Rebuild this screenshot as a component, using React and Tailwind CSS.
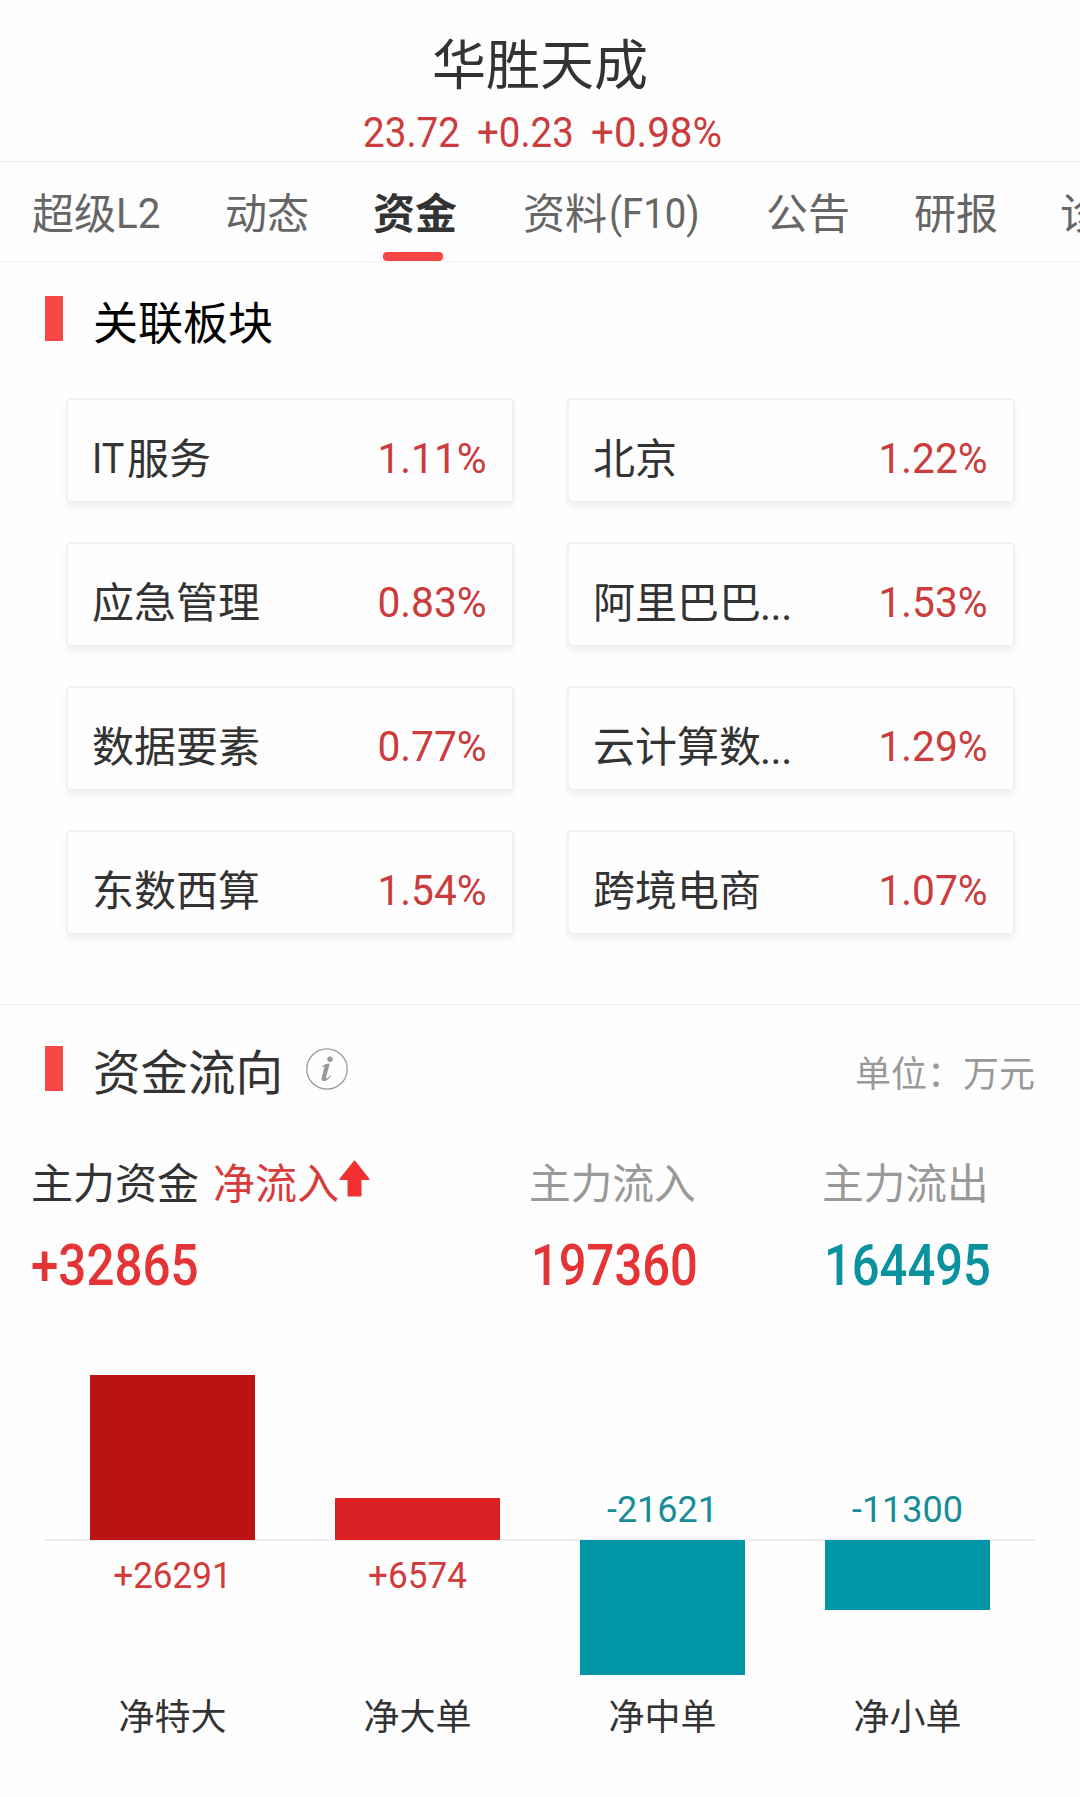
const tabs = [
  { pre: '超级', latin: 'L2', w: 'w-[45px]', scale: 'scale-x-[0.96]' },
  { pre: '动态' },
  { pre: '资金', active: true },
  { pre: '资料', latin: '(F10)', w: 'w-[95px] pl-[2px]', scale: 'scale-x-[0.91]', shift: 'ml-[2px]' },
  { pre: '公告' },
  { pre: '研报' },
  { pre: '诊', shift: '-ml-[2px]' },
];

const sectors = [
  { latin: 'IT', name: '服务', pct: '1.11%' },
  { name: '北京', pct: '1.22%' },
  { name: '应急管理', pct: '0.83%' },
  { name: '阿里巴巴', more: true, pct: '1.53%' },
  { name: '数据要素', pct: '0.77%' },
  { name: '云计算数', more: true, pct: '1.29%' },
  { name: '东数西算', pct: '1.54%' },
  { name: '跨境电商', pct: '1.07%' },
];

const flows = [
  { name: '净特大', value: 26291, height: 165, color: 'bg-[#bd1213]' },
  { name: '净大单', value: 6574, height: 42, color: 'bg-[#db2123]' },
  { name: '净中单', value: -21621, height: 135, color: 'bg-[#0096a6]' },
  { name: '净小单', value: -11300, height: 70, color: 'bg-[#0096a6]' },
];

function Header() {
  return (
    <header className="flex h-[162px] flex-col items-center border-b border-[#ebebeb] pt-[32px]">
      <h1 className="h-[60px] text-[54px] leading-[60px] text-[#333]">华胜天成</h1>
      <div className="mt-[11px] flex h-[60px] w-[355px] gap-[17px] whitespace-nowrap font-[Roboto] text-[42px] leading-[60px] text-[#cb3c3c]">
        <div className="w-[97px]"><span className="inline-block origin-left scale-x-[0.92]">23.72</span></div>
        <div className="w-[97px]"><span className="inline-block origin-left scale-x-[0.915]">+0.23</span></div>
        <div className="w-[132px]"><span className="inline-block origin-left scale-x-[0.96]">+0.98%</span></div>
      </div>
    </header>
  );
}

function Tabs() {
  return (
    <nav className="flex h-[100px] gap-[64px] overflow-hidden border-b border-[#f1f1f1] pl-[32px] text-[42px] text-[#666]">
      {tabs.map((t) => (
        <div key={t.pre} className={`relative flex shrink-0 ${t.shift || ''} ${t.active ? 'font-bold text-[#333]' : ''}`}>
          <span className="leading-[98px]">{t.pre}</span>
          {t.latin && (
            <span className={`${t.w} whitespace-nowrap font-[Roboto] leading-[104px]`}>
              <span className={`inline-block origin-left ${t.scale}`}>{t.latin}</span>
            </span>
          )}
          {t.active && <i className="absolute bottom-0 left-[10px] h-[9px] w-[60px] rounded-[4px] bg-[#f74646]" />}
        </div>
      ))}
    </nav>
  );
}

function SectorCard({ name, pct, latin, more }) {
  return (
    <div className="flex h-[105px] justify-between rounded-[5px] border-2 border-[#f0f0f0] bg-[#fefefe] pl-[24px] pr-[25px] pt-[28px] leading-[60px] shadow-[0_4px_6px_rgba(0,0,0,0.06)]">
      <span className="flex h-[60px] text-[42px] text-[#333]">
        {latin && <span className="w-[35px] pt-px font-[Roboto]"><span className="inline-block origin-left scale-x-[0.9]">{latin}</span></span>}
        <span className="-mt-[2px]">{name}</span>
        {more && <span className="-ml-px pt-[4px] font-[Roboto] tracking-[-0.5px]">...</span>}
      </span>
      <span className="mt-px h-[60px] origin-right scale-x-[0.97] font-[Roboto] text-[42px] text-[#cb3c3c]">{pct}</span>
    </div>
  );
}

function InfoIcon() {
  return (
    <svg width="42" height="42" viewBox="0 0 42 42" fill="none">
      <circle cx="21" cy="21" r="20.2" stroke="#999" strokeWidth="1.3" />
      <circle cx="24" cy="11.3" r="2.7" fill="#999" />
      <path d="M16 18.5 C18 16.5 21 15.8 23.8 15.6 L20.2 29 C19.7 31 20.8 31 24.4 27.4 L25 28.2 C22 31.8 19.5 33.3 17.5 33.1 C15.6 32.9 15.2 31.3 15.7 29.3 L18.4 19.3 C18.7 18 17.8 18.2 16.3 19.3 Z" fill="#999" />
    </svg>
  );
}

function Metric({ label, value, color }) {
  return (
    <div>
      <div className="-ml-px h-[56px] text-[41.7px] leading-[52px] text-[#999]">{label}</div>
      <div className={`mt-[26px] h-[60px] pl-[1px] font-[Roboto] text-[57px] font-medium leading-[58px] ${color}`}>
        <span className="inline-block origin-left scale-x-[0.858]">{value}</span>
      </div>
    </div>
  );
}

function FlowBar({ item }) {
  const up = item.value > 0;
  const bar = <div className={`w-full ${item.color}`} style={{ height: item.height }} />;
  const label = (
    <div className={`font-[Roboto] text-[36px] leading-[40px] ${up ? 'scale-x-[0.975] text-[#d33a3a]' : 'text-[#178d98]'}`}>
      {up ? `+${item.value}` : item.value}
    </div>
  );
  return (
    <div className="w-[165px] text-center">
      <div className="flex h-[170px] flex-col justify-end">
        {up ? bar : <div className="pb-[10px]">{label}</div>}
      </div>
      <div className="h-[149px]">{up ? <div className="pt-[16px]">{label}</div> : bar}</div>
      <div className="text-[36px] leading-[50px] text-[#333]">{item.name}</div>
    </div>
  );
}

export default function App() {
  return (
    <main className="h-[1797px] w-[1080px] overflow-hidden bg-[#fefefe] font-['Noto_Sans_CJK_SC',sans-serif]">
      <Header />
      <Tabs />
      <section className="h-[743px] border-b border-[#e9eded]">
        <div className="flex pl-[45px] pt-[34px]">
          <i className="h-[45px] w-[18px] bg-[#f74646]" />
          <h2 className="ml-[30px] h-[60px] text-[45px] leading-[50px] text-black">关联板块</h2>
        </div>
        <div className="mt-[42px] grid grid-cols-2 gap-x-[53px] gap-y-[39px] pl-[66px] pr-[65px]">
          {sectors.map((s) => <SectorCard key={s.name} {...s} />)}
        </div>
      </section>
      <section>
        <div className="flex h-[150px] pl-[45px] pr-[45px] pt-[41px]">
          <i className="h-[45px] w-[18px] bg-[#f74646]" />
          <h2 className="ml-[30px] text-[47.5px] leading-[48px] text-[#333]">资金流向</h2>
          <div className="ml-[23px] mt-[2px]"><InfoIcon /></div>
          <span className="ml-auto text-[36px] leading-[50px] text-[#999]">单位：万元</span>
        </div>
        <div className="flex pl-[31px]">
          <div className="w-[499px]">
            <div className="flex h-[56px] text-[42px] leading-[52px] text-[#333]">
              主力资金<span className="ml-[14px] text-[#d93a3a]">净流入</span>
              <svg className="mt-[5px]" width="31" height="38" viewBox="0 0 31 38">
                <path d="M15.5 1.5 L29.5 19 H21.5 V35.5 H9.5 V19 H1.5 Z" fill="#f23030" stroke="#f23030" strokeWidth="2" strokeLinejoin="round" />
              </svg>
            </div>
            <div className="mt-[26px] h-[60px] font-[Roboto] text-[57px] font-medium leading-[58px] text-[#e53436]">
              <span className="inline-block origin-left scale-x-[0.865]">+32865</span>
            </div>
          </div>
          <div className="w-[293px]"><Metric label="主力流入" value="197360" color="text-[#e53436]" /></div>
          <Metric label="主力流出" value="164495" color="text-[#0a929f]" />
        </div>
        <div className="relative mt-[73px]">
          <div className="absolute left-[45px] top-[169px] h-[2px] w-[990px] bg-[#ececec]" />
          <div className="relative flex justify-between px-[90px]">
            {flows.map((f) => <FlowBar key={f.name} item={f} />)}
          </div>
        </div>
      </section>
    </main>
  );
}
